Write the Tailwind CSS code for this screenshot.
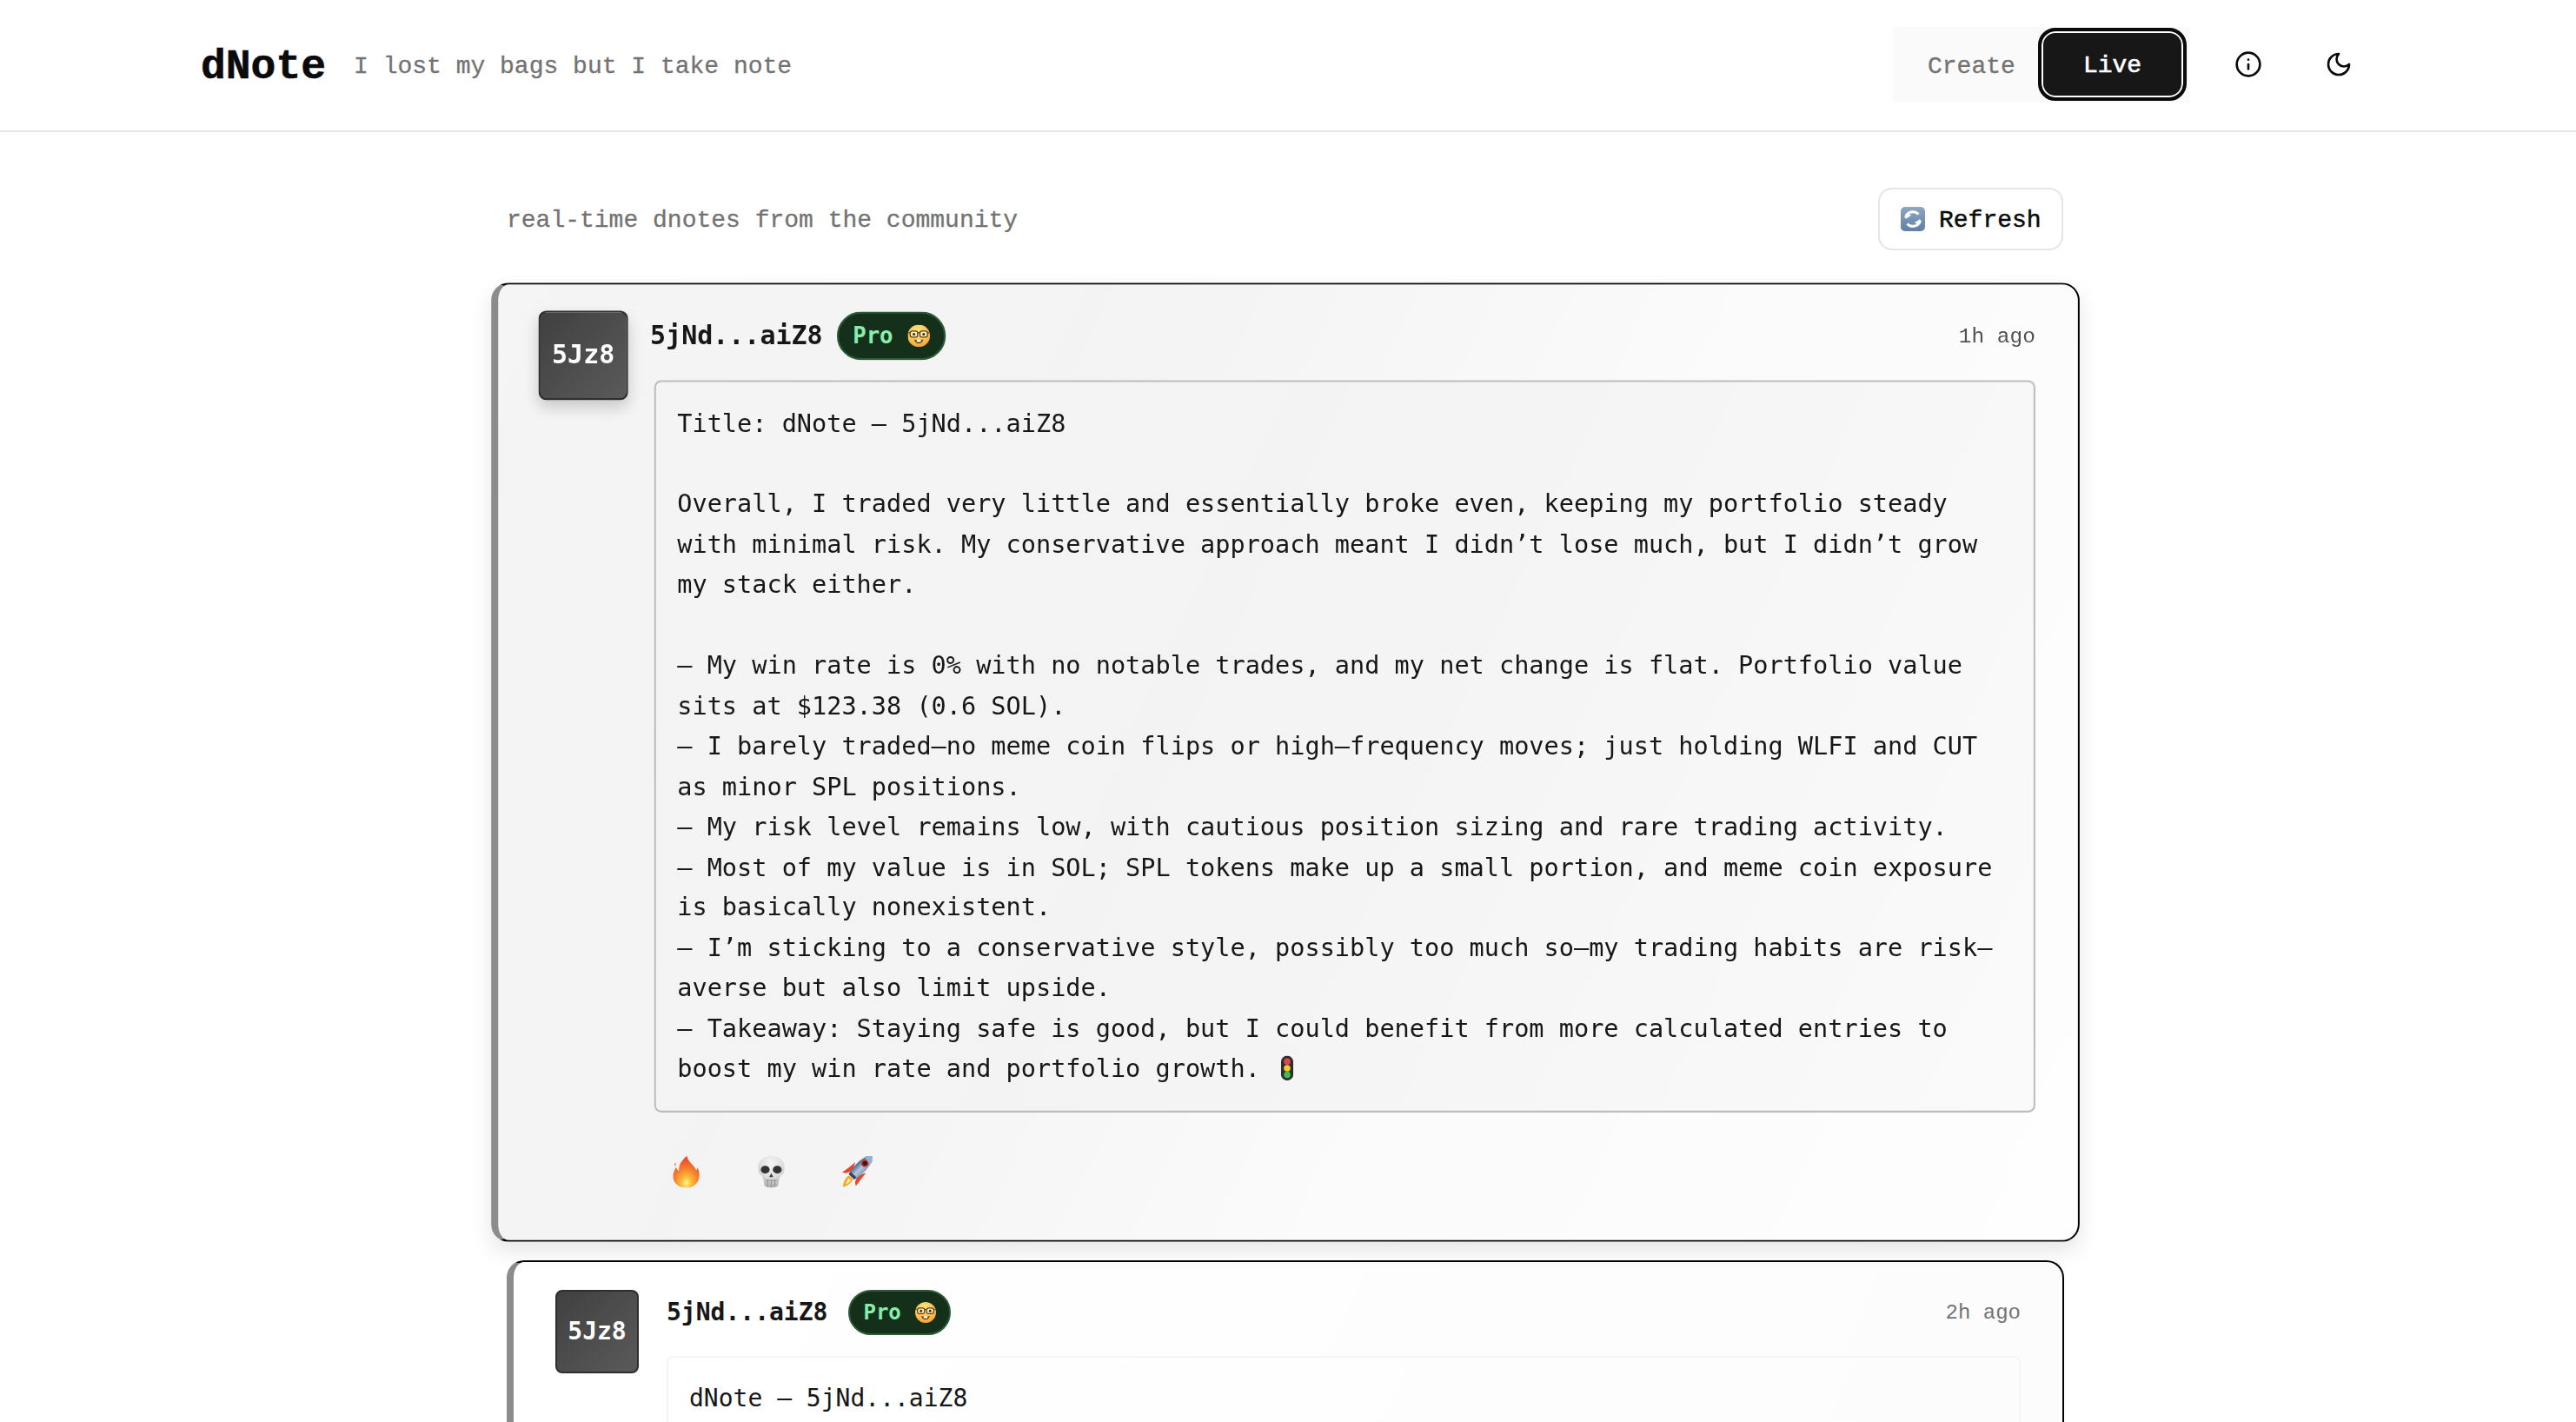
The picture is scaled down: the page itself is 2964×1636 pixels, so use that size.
<!DOCTYPE html>
<html lang="en">
<head>
<meta charset="utf-8">
<title>dNote</title>
<script src="https://cdn.jsdelivr.net/npm/@tailwindcss/browser@4"></script>
</head>
<body class="bg-white h-[1636px] overflow-hidden font-['Liberation_Mono',monospace] text-[#171717]">
<svg class="absolute w-0 h-0" aria-hidden="true">
  <defs>
    <radialGradient id="fireG" cx="0.5" cy="0.85" r="0.8">
      <stop offset="0" stop-color="#fff3a8"/><stop offset="0.22" stop-color="#fdc13a"/><stop offset="0.55" stop-color="#f7822d"/><stop offset="1" stop-color="#e9452a"/>
    </radialGradient>
    <radialGradient id="faceG" cx="0.45" cy="0.3" r="0.8">
      <stop offset="0" stop-color="#ffe68a"/><stop offset="0.6" stop-color="#fcc04a"/><stop offset="1" stop-color="#ee9430"/>
    </radialGradient>
    <linearGradient id="refG" x1="0" y1="0" x2="0" y2="1">
      <stop offset="0" stop-color="#8ea6c3"/><stop offset="1" stop-color="#5f7fa6"/>
    </linearGradient>
    <radialGradient id="skullG" cx="0.5" cy="0.25" r="0.85">
      <stop offset="0" stop-color="#f6f6f6"/><stop offset="0.5" stop-color="#dedede"/><stop offset="1" stop-color="#9c9c9c"/>
    </radialGradient>
    <linearGradient id="rockG" x1="0" y1="0" x2="1" y2="0">
      <stop offset="0" stop-color="#46668f"/><stop offset="0.55" stop-color="#b6c9dc"/><stop offset="1" stop-color="#7f9cbd"/>
    </linearGradient>
    <symbol id="nerd" viewBox="0 0 22 22">
      <circle cx="11" cy="11" r="11" fill="url(#faceG)"/>
      <rect x="2.500" y="6.300" width="7.400" height="6" rx="2" fill="#feeeb8" stroke="#5a3d14" stroke-width="1.100"/>
      <rect x="12.100" y="6.300" width="7.400" height="6" rx="2" fill="#feeeb8" stroke="#5a3d14" stroke-width="1.100"/>
      <path d="M9.900 8h2.200M0.800 8h1.700M19.500 8h1.700" stroke="#5a3d14" stroke-width="1.100"/>
      <circle cx="6.200" cy="9.400" r="1.300" fill="#3b2a12"/><circle cx="15.800" cy="9.400" r="1.300" fill="#3b2a12"/>
      <path d="M6.500 14.600Q11 16 15.500 14.600Q14.500 18.600 11 18.600Q7.500 18.600 6.500 14.600Z" fill="#7a431c"/>
      <rect x="9" y="14.900" width="4" height="2.100" fill="#fff"/>
    </symbol>
    <symbol id="fire" viewBox="0 0 30 36">
      <path d="M16 0C16.500 6 23 9.500 26.500 16C27.500 14.800 27.800 13.800 27.800 12.800C30 17 30.500 21 29.500 25C28 32 22 36 15 36C7 36 .8 31 .3 24C0 19 2 16 3.500 12.500C4.300 14.800 5.500 16 7 16.800C6 10 10.500 4.500 16 0Z" fill="url(#fireG)"/>
      <path d="M3.500 7.500C3.800 9 3 10.500 1.800 11.500C1.500 9.800 2.200 8.500 3.500 7.500Z" fill="#f2673a"/>
    </symbol>
    <symbol id="skull" viewBox="0 0 30 36">
      <path d="M15 0C24 0 30 5.500 30 13.500C30 18 28 21 25 23L24 26L22.500 34Q15 38 7.500 34L6 26L5 23C2 21 0 18 0 13.500C0 5.500 6 0 15 0Z" fill="url(#skullG)"/>
      <ellipse cx="8.200" cy="15.500" rx="5" ry="4.400" fill="#333"/>
      <ellipse cx="21.800" cy="15.500" rx="5" ry="4.400" fill="#333"/>
      <path d="M15 19.500L17.200 24H12.800Z" fill="#3a3a3a"/>
      <path d="M8.500 27.500H21.500M11 26.500V34.500M15 26.500V35M19 26.500V34.500" stroke="#8f8f8f" stroke-width="1"/>
    </symbol>
    <symbol id="rocket" viewBox="0 0 36 36">
      <path d="M9.500 13L17 7L13.500 17L6 19.500L2 18.500Z" fill="#e8452c"/>
      <path d="M23 26.500L29 19L19 22.500L16.500 30L17.500 34Z" fill="#e8452c"/>
      <path d="M10 22C5.500 24 3.500 30 2.500 35C7.500 34 12 31 14 26.500Z" fill="#f8a72a"/>
      <path d="M9.500 25C7.500 27 6.500 29.500 6 32C8.500 31 10.500 29.500 11.500 27Z" fill="#fff0a0"/>
      <g transform="rotate(45 22 14)">
        <path d="M22 -8C29 -1 29.500 14 26.500 27H17.500C14.500 14 15 -1 22 -8Z" fill="url(#rockG)"/>
        <path d="M22 -8C24.500 -5.500 26.200 -2.500 27 1H17C17.800 -2.500 19.500 -5.500 22 -8Z" fill="#8fb2d8"/>
        <circle cx="22" cy="6" r="4.300" fill="#d8352c"/>
        <circle cx="22" cy="6" r="2.700" fill="#222"/>
        <rect x="17.500" y="24" width="9" height="3.500" fill="#39475a"/>
      </g>
    </symbol>
    <symbol id="light" viewBox="0 0 14 28">
      <rect width="14" height="28" rx="7" fill="#2f2f2f"/>
      <circle cx="7" cy="6.500" r="3.700" fill="#e3444f"/>
      <circle cx="7" cy="14" r="3.700" fill="#f6c92f"/>
      <circle cx="7" cy="21.500" r="3.700" fill="#3fc04a"/>
    </symbol>
  </defs>
</svg>

<header class="h-[152px] border-b-2 border-[#e5e5e5]">
  <div class="w-[2958px] h-full">
    <div class="w-[2560px] mx-auto px-8 h-full pb-[2px] flex items-center justify-between">
      <div class="flex items-center gap-8">
        <h1 class="text-5xl font-bold text-[#0a0a0a] leading-none pt-[6px] [-webkit-text-stroke:0.6px_#0a0a0a]">dNote</h1>
        <p class="text-[28px] text-[#737373] pt-[6px] [-webkit-text-stroke:0.3px_#737373]">I lost my bags but I take note</p>
      </div>
      <div class="flex items-center gap-8">
        <nav class="flex items-center bg-[#fafafa] h-[87px] w-[341px] pl-[40px]">
          <span class="text-[28px] text-[#737373] w-[127px] pt-[6px] [-webkit-text-stroke:0.3px_#737373]">Create</span>
          <span class="w-[171px] h-[84px] pt-[4px] flex items-center justify-center rounded-[20px] bg-[#171717] border-[4px] border-[#0a0a0a] shadow-[inset_0_0_0_2px_#ffffff] text-white text-[28px] [-webkit-text-stroke:0.6px_#ffffff]">Live</span>
        </nav>
        <div class="flex items-center gap-8">
          <span class="w-[72px] h-[72px] flex items-center justify-center">
            <svg class="w-8 h-8" viewBox="0 0 24 24" fill="none" stroke="#0a0a0a" stroke-width="2" stroke-linecap="round" stroke-linejoin="round"><circle cx="12" cy="12" r="10"/><path d="M12 16v-4"/><path d="M12 8h.01"/></svg>
          </span>
          <span class="w-[72px] h-[72px] flex items-center justify-center">
            <svg class="w-8 h-8" viewBox="0 0 24 24" fill="none" stroke="#0a0a0a" stroke-width="2" stroke-linecap="round" stroke-linejoin="round"><path d="M12 3a6 6 0 0 0 9 9 9 9 0 1 1-9-9Z"/></svg>
          </span>
        </div>
      </div>
    </div>
  </div>
</header>

<div class="w-[2958px]">
  <main class="w-[1792px] mx-auto pt-[64px]">
    <div class="flex items-center justify-between h-[72px] mb-[48px]">
      <p class="text-[28px] text-[#737373] pt-[4px] [-webkit-text-stroke:0.3px_#737373]">real-time dnotes from the community</p>
      <button class="h-[72px] w-[213px] mr-[1px] flex items-center gap-[16px] pl-[24px] border-2 border-[#e5e5e5] rounded-[16px] bg-white text-[28px] text-[#0a0a0a]">
        <svg class="w-7 h-7 shrink-0" viewBox="0 0 28 28"><rect width="28" height="28" rx="5" fill="url(#refG)"/><path d="M5.500 12.500A8.800 8.800 0 0 1 20.500 8.500" fill="none" stroke="#fff" stroke-width="3"/><path d="M22.500 15.500A8.800 8.800 0 0 1 7.500 19.500" fill="none" stroke="#fff" stroke-width="3"/><path d="M5 8.500L12 8.500L6.500 14.500Z" fill="#fff" transform="rotate(12 8 11)"/><path d="M23 19.500L16 19.500L21.500 13.500Z" fill="#fff" transform="rotate(12 20 17)"/></svg>
        <span class="pt-[4px] [-webkit-text-stroke:0.5px_#0a0a0a]">Refresh</span>
      </button>
    </div>

    <div class="flex flex-col gap-8">
      <!-- hovered card -->
      <article class="scale-[1.02] h-[1082px] border-y-2 border-r-2 border-l-8 border-y-black border-r-black border-l-[#8c8c8c] rounded-[20px] bg-[linear-gradient(115deg,#f5f5f5_0%,#f3f3f3_30%,#fbfbfb_65%,#fefefe_100%)] shadow-[0_10px_24px_rgba(0,0,0,0.1)] pl-[48px] pr-[48px] pt-[32px] flex gap-8 font-['DejaVu_Sans_Mono',monospace]">
        <div class="scale-105 w-[96px] h-[96px] shrink-0 rounded-[8px] border-2 border-[#2e2e2e] bg-[linear-gradient(135deg,#404040,#5a5a5a)] shadow-[0_8px_16px_rgba(0,0,0,0.18)] flex items-center justify-center text-white text-[28px] font-bold">5Jz8</div>
        <div class="flex-1 min-w-0">
          <div class="flex items-center justify-between h-[52px] mb-6">
            <div class="flex items-center gap-6">
              <span class="scale-105 text-[28px] font-bold">5jNd...aiZ8</span>
              <span class="scale-105 h-[52px] flex items-center rounded-full border-2 border-[#2e5a36] bg-[#14301a] pl-[15px] pr-[15px] text-[24px] font-bold text-[#86efac]">Pro<svg class="w-[24px] h-[24px] ml-[16px]"><use href="#nerd"/></svg></span>
            </div>
            <span class="font-['Liberation_Mono',monospace] text-[24px] text-[#525252] pt-[2px]">1h ago</span>
          </div>
          <div class="h-[826px] border-2 border-[#bdbdbd] rounded-[8px] bg-[linear-gradient(115deg,#f4f4f4,#f3f3f3_40%,#fafafa)] px-6 pt-6 text-[28px] leading-[45.5px] whitespace-pre-wrap">Title: dNote — 5jNd...aiZ8

Overall, I traded very little and essentially broke even, keeping my portfolio steady with minimal risk. My conservative approach meant I didn’t lose much, but I didn’t grow my stack either.

– My win rate is 0% with no notable trades, and my net change is flat. Portfolio value sits at $123.38 (0.6 SOL).
– I barely traded—no meme coin flips or high–frequency moves; just holding WLFI and CUT as minor SPL positions.
– My risk level remains low, with cautious position sizing and rare trading activity.
– Most of my value is in SOL; SPL tokens make up a small portion, and meme coin exposure is basically nonexistent.
– I’m sticking to a conservative style, possibly too much so—my trading habits are risk–averse but also limit upside.
– Takeaway: Staying safe is good, but I could benefit from more calculated entries to boost my win rate and portfolio growth. <svg class="inline-block w-[14px] h-[28px] ml-[7px] align-[-4px]"><use href="#light"/></svg></div>
          <div class="flex items-center h-[86px] mt-6 gap-6">
            <span class="w-[72px] flex justify-center"><svg class="w-[30px] h-[36px]"><use href="#fire"/></svg></span>
            <span class="w-[72px] flex justify-center"><svg class="w-[30px] h-[36px]"><use href="#skull"/></svg></span>
            <span class="w-[72px] flex justify-center"><svg class="w-[36px] h-[36px]"><use href="#rocket"/></svg></span>
          </div>
        </div>
      </article>

      <!-- second card -->
      <article class="h-[600px] border-y-2 border-r-2 border-l-8 border-y-black border-r-black border-l-[#8c8c8c] rounded-[20px] bg-[linear-gradient(115deg,#ffffff,#fcfcfc)] pl-[48px] pr-[48px] pt-[32px] flex gap-8 font-['DejaVu_Sans_Mono',monospace]">
        <div class="w-[96px] h-[96px] shrink-0 rounded-[8px] border-2 border-[#2e2e2e] bg-[linear-gradient(135deg,#404040,#5a5a5a)] flex items-center justify-center text-white text-[28px] font-bold">5Jz8</div>
        <div class="flex-1 min-w-0">
          <div class="flex items-center justify-between h-[52px] mb-6">
            <div class="flex items-center gap-6">
              <span class="text-[28px] font-bold">5jNd...aiZ8</span>
              <span class="h-[52px] flex items-center rounded-full border-2 border-[#2e5a36] bg-[#14301a] pl-[15px] pr-[15px] text-[24px] font-bold text-[#86efac]">Pro<svg class="w-[24px] h-[24px] ml-[16px]"><use href="#nerd"/></svg></span>
            </div>
            <span class="font-['Liberation_Mono',monospace] text-[24px] text-[#737373] pt-[2px]">2h ago</span>
          </div>
          <div class="h-[500px] border-2 border-[#f5f5f5] rounded-[8px] bg-[linear-gradient(115deg,#ffffff,#fcfcfc)] px-6 pt-6 text-[28px] leading-[45.5px] whitespace-pre-wrap">dNote — 5jNd...aiZ8</div>
        </div>
      </article>
    </div>
  </main>
</div>
</body>
</html>
